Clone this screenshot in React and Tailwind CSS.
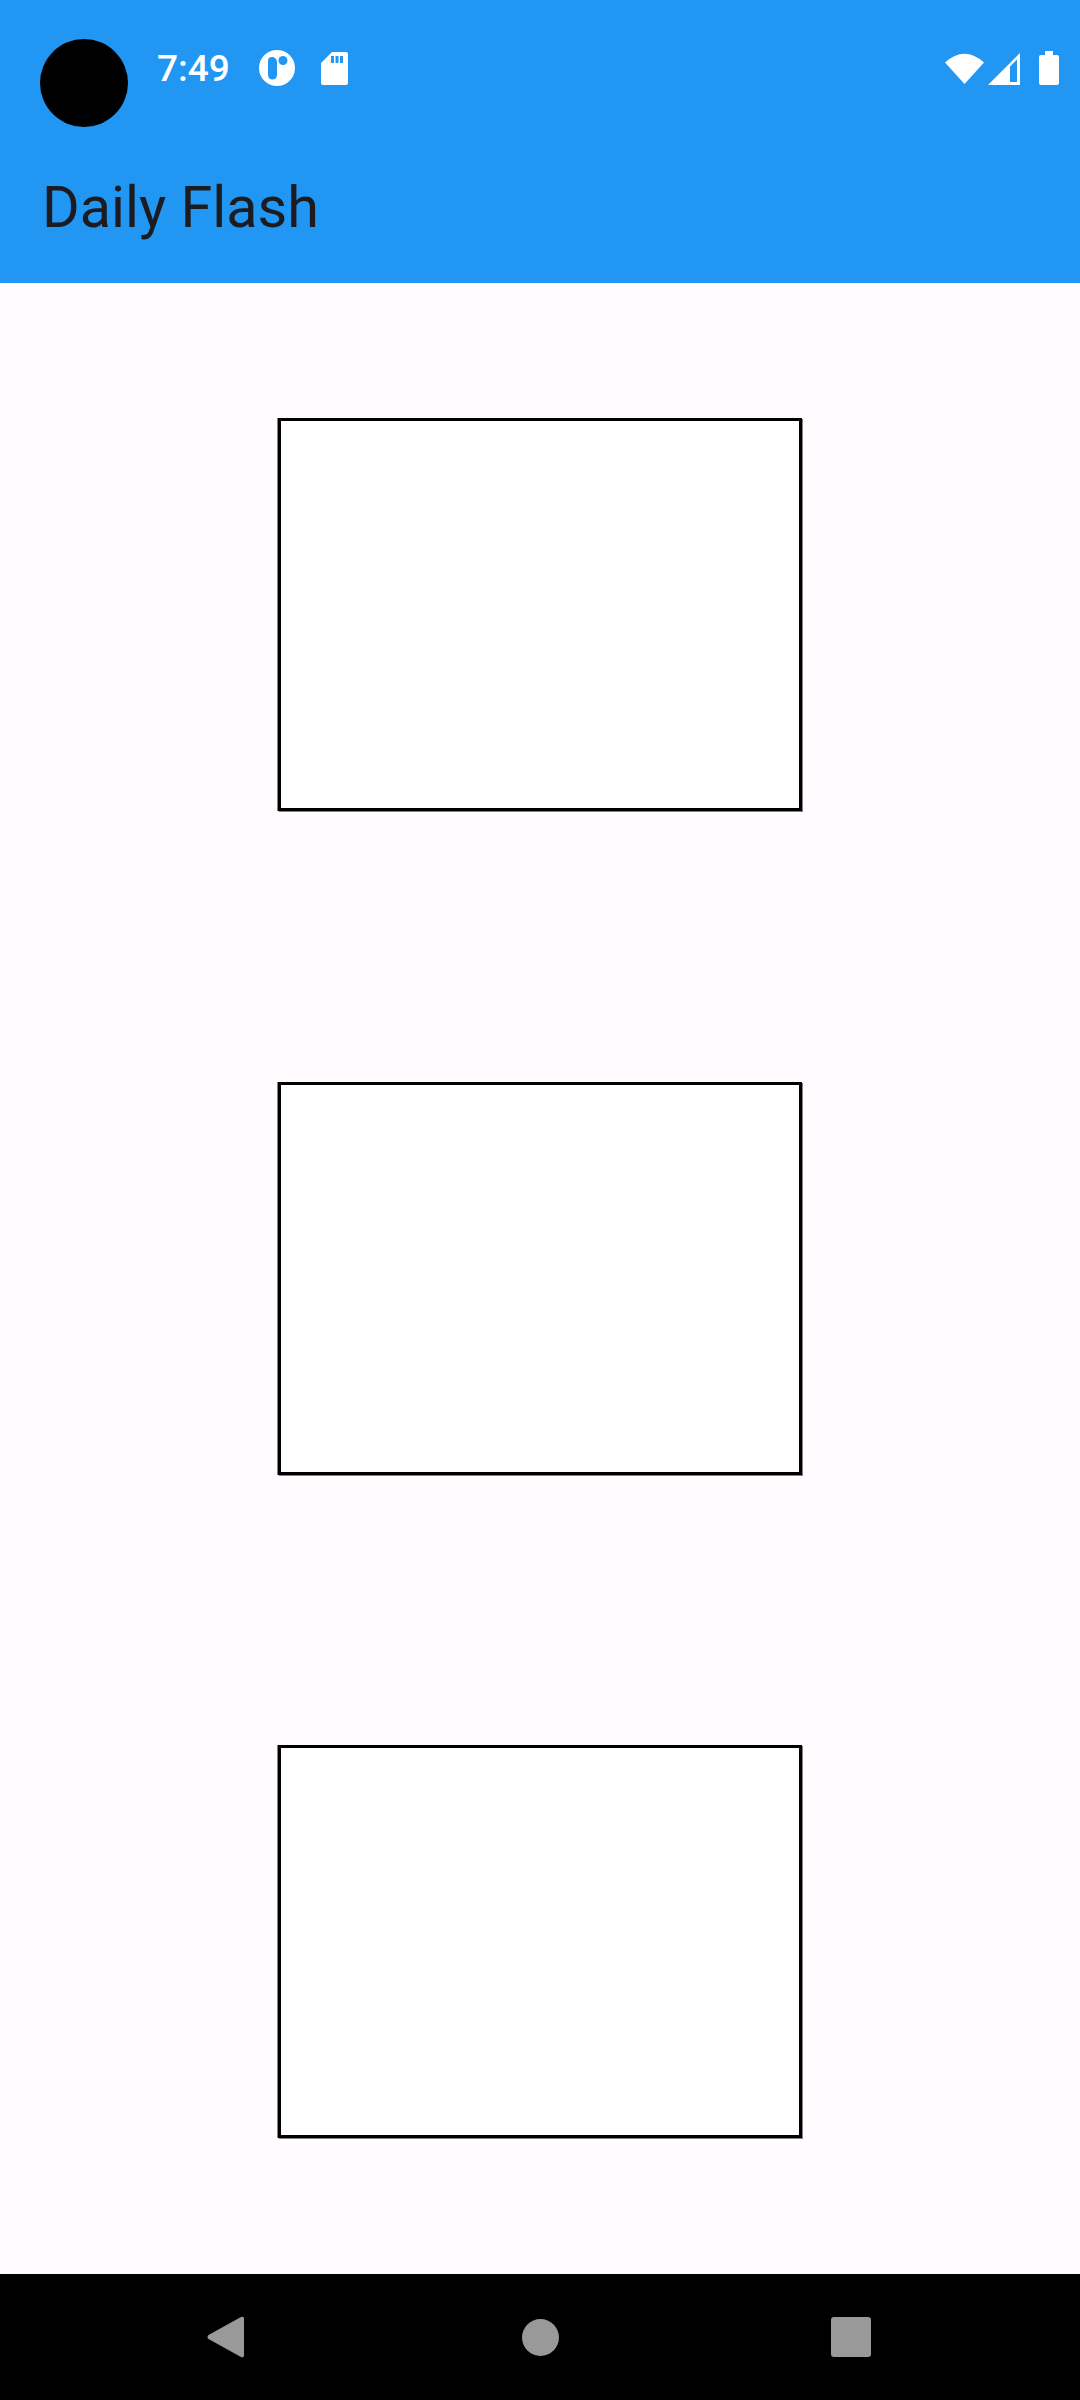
import React from 'react';

function StatusIcons() {
  return (
    <div className="ml-auto mr-[21px] flex items-start">
      <svg width="39" height="32" viewBox="0 0 39 32" className="mt-px">
        <path d="M0 10.5 Q19.5 -7 39 10.5 L19.5 32 Z" fill="#fff" />
      </svg>
      <svg width="32" height="32" viewBox="0 0 32 32" className="ml-1 mt-[2px]">
        <path
          fillRule="evenodd"
          d="M32 0 V32 H0 Z M29 6.5 L22 13.5 V29 H29 Z"
          fill="#fff"
        />
      </svg>
      <svg width="20" height="34" viewBox="0 0 20 34" className="ml-[19px]">
        <path d="M6 0 H14 V4 H18 A2 2 0 0 1 20 6 V32 A2 2 0 0 1 18 34 H2 A2 2 0 0 1 0 32 V6 A2 2 0 0 1 2 4 H6 Z" fill="#fff" />
      </svg>
    </div>
  );
}

function FlashBox() {
  return <div className="w-[524px] h-[393px] bg-white border-[3px] border-black shadow-[-1px_0_0_#808080,1px_1px_0_#808080]" />;
}

export default function App() {
  return (
    <div className="w-[1080px] h-[2400px] flex flex-col relative bg-[#fffbfe]" style={{ fontFamily: 'Roboto, sans-serif' }}>
      <div className="absolute left-[40px] top-[39px] w-[88px] h-[88px] rounded-full bg-black" />

      <header className="h-[283px] bg-[#2196f3] shrink-0">
        <div className="flex items-center pt-[50px] pl-[157px] h-[86px]">
          <span className="mt-[2px] text-[37px] leading-[36px] font-medium text-white">7:49</span>
          <svg width="36" height="36" viewBox="0 0 36 36" className="ml-[29px]">
            <circle cx="18" cy="18" r="18" fill="#fff" />
            <path d="M13 7 A5 5 0 0 1 18 12 V25 A4.5 4.5 0 0 1 9 25 V11 A4 4 0 0 1 13 7 Z" fill="#2196f3" />
            <circle cx="24" cy="10.5" r="4.5" fill="#2196f3" />
          </svg>
          <svg width="27" height="33" viewBox="0 0 27 33" className="ml-[26px]">
            <path fillRule="evenodd" d="M11 0 H25 A2 2 0 0 1 27 2 V31 A2 2 0 0 1 25 33 H2 A2 2 0 0 1 0 31 V11 Z M10 4 V11 H13 V4 Z M14.5 4 V11 H17.5 V4 Z M19 4 V11 H22 V4 Z" fill="#fff" />
          </svg>
          <StatusIcons />
        </div>
        <h1 className="pl-[42px] mt-[88px] text-[57.5px] leading-[68px] font-normal text-[#1c1b1f]">Daily Flash</h1>
      </header>

      <main className="flex-1 flex flex-col items-center justify-around pb-[0.5px]">
        <FlashBox />
        <FlashBox />
        <FlashBox />
      </main>

      <nav className="h-[126px] shrink-0 bg-black flex items-center pl-[207px]">
        <svg width="37" height="42" viewBox="0 0 37 42">
          <path d="M34 1 L1.5 19 A2.5 2.5 0 0 0 1.5 23 L34 41 A2 2 0 0 0 37 39 V3 A2 2 0 0 0 34 1 Z" fill="#999" />
        </svg>
        <div className="ml-[278px] w-[37px] h-[37px] rounded-full bg-[#999]" />
        <div className="ml-[272px] w-[40px] h-[40px] rounded-[3px] bg-[#999]" />
      </nav>
    </div>
  );
}
